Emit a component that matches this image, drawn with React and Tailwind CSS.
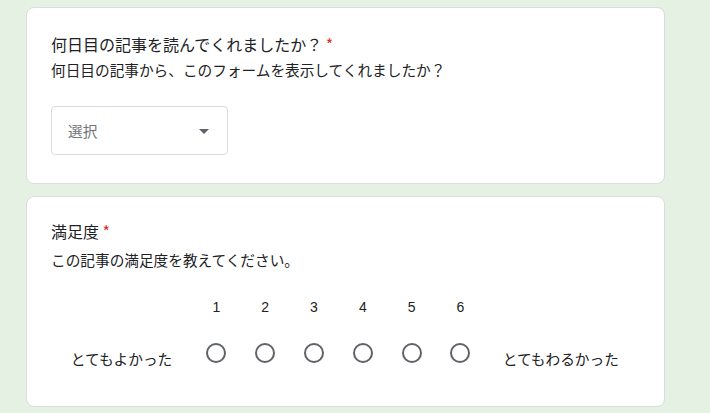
import React from "react";

const font = { fontFamily: '"Noto Sans CJK JP", "Noto Sans", Roboto, sans-serif' };

function Radio() {
  return <div className="w-5 h-5 rounded-full border-2 border-[#5f6368] box-border" />;
}

export default function App() {
  const nums = [1, 2, 3, 4, 5, 6];
  return (
    <div className="w-[710px] h-[413px] bg-[#e4f1e3] overflow-hidden pt-[7px] pl-[26px] text-[#202124]" style={font}>
      <div className="w-[639px] flex flex-col gap-3">
        <div className="bg-white border border-[#dadce0] rounded-lg pl-6 pt-6 pb-[28px]">
          <div className="text-[16px] leading-6">
            何日目の記事を読んでくれましたか？<span className="text-[#d93025]"> *</span>
          </div>
          <div className="text-[14.67px] leading-5 mt-1">何日目の記事から、このフォームを表示してくれましたか？</div>
          <div className="mt-[26px] w-[177px] h-[49px] border border-[#dadce0] rounded flex items-center justify-between pl-4 pr-[18px]">
            <span className="text-[14.67px] text-[#70757a]">選択</span>
            <svg width="10" height="5" viewBox="0 0 10 5" className="mt-[2px]">
              <path d="M0 0 L10 0 L5 5 Z" fill="#5f6368" />
            </svg>
          </div>
        </div>
        <div className="bg-white border border-[#dadce0] rounded-lg pl-6 pt-[22px] pb-[37px]">
          <div className="text-[16px] leading-6">
            満足度<span className="text-[#d93025]"> *</span>
          </div>
          <div className="text-[14.67px] leading-5 mt-[7px]">この記事の満足度を教えてください。</div>
          <div className="flex mt-[29px]">
            <div className="w-[141px]" />
            {nums.map((n) => (
              <div key={n} className="w-[48.8px] text-center text-[14px] leading-4" style={{ fontFamily: '"Liberation Sans", Arial, sans-serif' }}>
                {n}
              </div>
            ))}
          </div>
          <div className="flex items-start mt-[28px]">
            <div className="w-[141px] text-center text-[14.67px] leading-5 mt-[6px]">とてもよかった</div>
            {nums.map((n) => (
              <div key={n} className="w-[48.8px] flex justify-center">
                <Radio />
              </div>
            ))}
            <div className="w-[152px] text-center text-[14.67px] leading-5 mt-[6px]">とてもわるかった</div>
          </div>
        </div>
      </div>
    </div>
  );
}
